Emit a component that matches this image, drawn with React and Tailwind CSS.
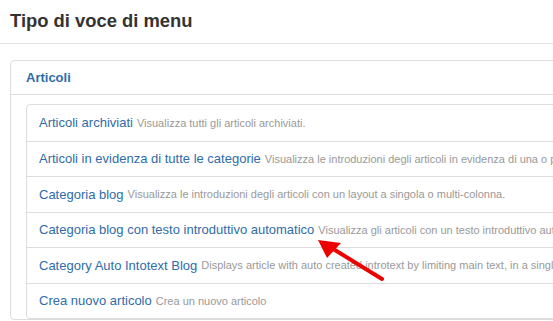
import React from 'react';

const items = [
  ['Articoli archiviati', 'Visualizza tutti gli articoli archiviati.'],
  ['Articoli in evidenza di tutte le categorie', 'Visualizza le introduzioni degli articoli in evidenza di una o più categorie.'],
  ['Categoria blog', 'Visualizza le introduzioni degli articoli con un layout a singola o multi-colonna.'],
  ['Categoria blog con testo introduttivo automatico', 'Visualizza gli articoli con un testo introduttivo automatico.'],
  ['Category Auto Intotext Blog', 'Displays article with auto created introtext by limiting main text, in a single or multi column layout.'],
  ['Crea nuovo articolo', 'Crea un nuovo articolo'],
];

export default function App() {
  return (
    <div className="relative w-[553px] h-[321px] overflow-hidden bg-white font-['Liberation_Sans',Arial,sans-serif]">
      {/* Page title */}
      <div className="h-[44px] border-b border-[#e5e5e5] pl-[10px] flex items-center">
        <h1 className="text-[18.4px] font-bold text-[#333333] leading-none">Tipo di voce di menu</h1>
      </div>

      {/* Panel */}
      <div className="mt-[16px] ml-[10px] w-[620px] border border-[#dddddd] rounded-[4px]">
        <div className="h-[34px] border-b border-[#dddddd] pl-[15px] flex items-center">
          <span className="text-[13px] font-bold text-[#2f6ca8]">Articoli</span>
        </div>
        <div className="pt-[9px] pl-[15px]">
          <div className="border border-[#dddddd] rounded-[4px]">
            {items.map(([title, desc], i) => (
              <div
                key={title}
                className={`h-[35.5px] pl-[12px] flex items-center whitespace-nowrap ${i > 0 ? 'border-t border-[#dddddd]' : ''}`}
              >
                <span className="text-[13px] text-[#2f6ca8]">{title}</span>
                <span className="text-[11px] text-[#999999] ml-[4px]">{desc}</span>
              </div>
            ))}
          </div>
        </div>
      </div>

      {/* Red annotation arrow */}
      <svg className="absolute left-0 top-0" width="553" height="321" viewBox="0 0 553 321">
        <line x1="382" y1="279" x2="330" y2="247" stroke="#ee0000" strokeWidth="4" strokeLinecap="round" />
        <polygon points="318,240 341,243 327,258" fill="#ee0000" />
      </svg>
    </div>
  );
}
